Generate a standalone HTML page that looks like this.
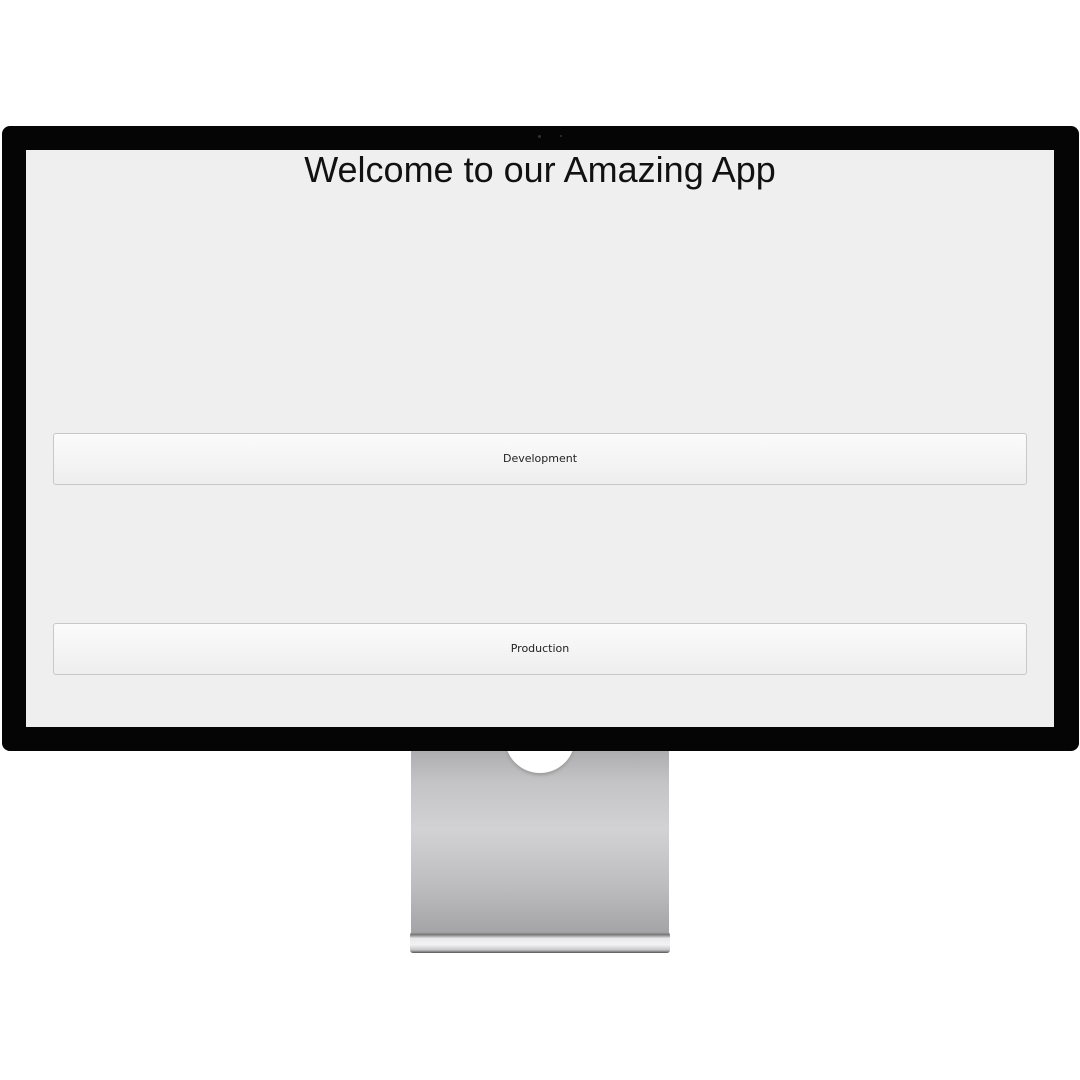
<!DOCTYPE html>
<html><head><style>
html,body{margin:0;padding:0;width:1080px;height:1080px;background:#fff;overflow:hidden;position:relative;font-family:"Liberation Sans",sans-serif}
.stand{position:absolute;left:411px;top:745px;width:258px;height:188px;background:linear-gradient(#a9a9ab 0%,#c4c4c6 20%,#d2d2d4 45%,#bdbdbf 75%,#a4a4a6 100%)}
.hole{position:absolute;left:505px;top:703px;width:70px;height:70px;border-radius:50%;background:#fff;box-shadow:0 2px 3px #999}
.base{position:absolute;left:410px;top:932px;width:260px;height:21px;border-radius:3px;background:linear-gradient(#aaa 0%,#777 12%,#e8e8ea 30%,#f3f3f4 60%,#c8c8ca 85%,#555 100%)}
.bezel{position:absolute;left:2px;top:126px;width:1077px;height:625px;background:#050505;border-radius:8px}
.screen{position:absolute;left:26px;top:150px;width:1028px;height:577px;background:#efefef}
h1{position:absolute;left:0;width:1028px;top:-1px;margin:0;text-align:center;font-weight:normal;font-size:36px;color:#111}
.btn{position:absolute;left:27px;width:972px;height:50px;border:1px solid #c8c8c8;border-radius:3px;background:linear-gradient(#fbfbfb,#eeeeee);font-family:"DejaVu Sans",sans-serif;font-size:11px;color:#222;text-align:center;line-height:50px}
.cam{position:absolute;top:135px;width:3px;height:3px;border-radius:50%;background:#333}
</style></head><body>
<div class="stand"></div>
<div class="hole"></div>
<div class="bezel"></div>
<div class="cam" style="left:538px"></div><div class="cam" style="left:560px;width:2px;height:2px"></div>
<div class="screen">
<h1>Welcome to our Amazing App</h1>
<div class="btn" style="top:283px">Development</div>
<div class="btn" style="top:473px">Production</div>
</div>
<div class="base"></div>
</body></html>
